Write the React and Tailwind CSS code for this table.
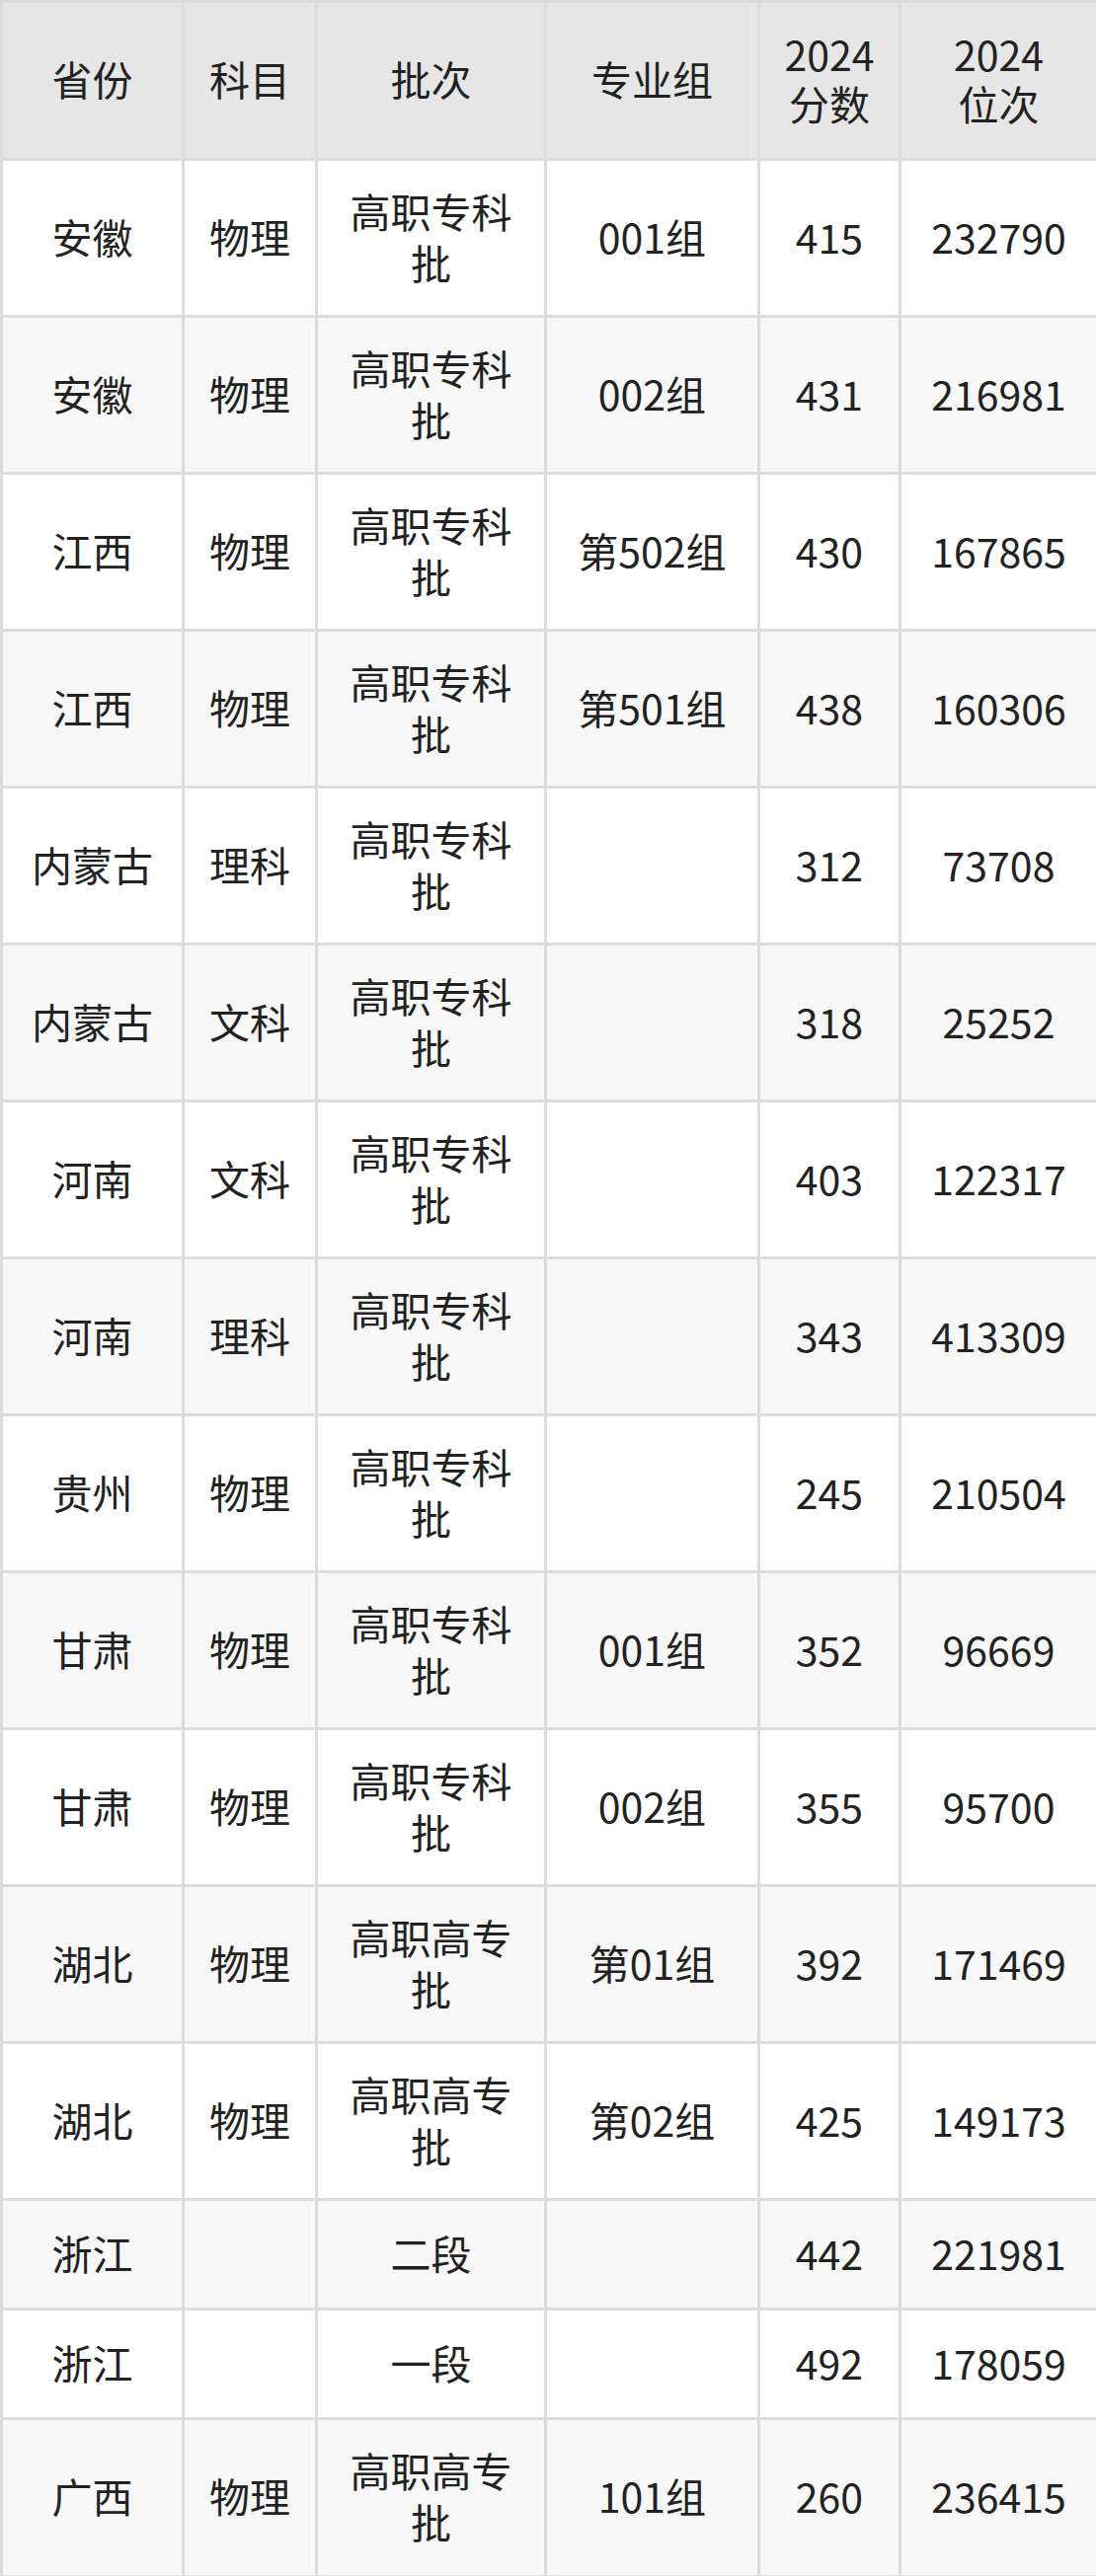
import React from "react";

const rows = [
  { prov: "安徽", subj: "物理", batch: "高职专科批", group: "001组", score: "415", rank: "232790" },
  { prov: "安徽", subj: "物理", batch: "高职专科批", group: "002组", score: "431", rank: "216981" },
  { prov: "江西", subj: "物理", batch: "高职专科批", group: "第502组", score: "430", rank: "167865" },
  { prov: "江西", subj: "物理", batch: "高职专科批", group: "第501组", score: "438", rank: "160306" },
  { prov: "内蒙古", subj: "理科", batch: "高职专科批", group: "", score: "312", rank: "73708" },
  { prov: "内蒙古", subj: "文科", batch: "高职专科批", group: "", score: "318", rank: "25252" },
  { prov: "河南", subj: "文科", batch: "高职专科批", group: "", score: "403", rank: "122317" },
  { prov: "河南", subj: "理科", batch: "高职专科批", group: "", score: "343", rank: "413309" },
  { prov: "贵州", subj: "物理", batch: "高职专科批", group: "", score: "245", rank: "210504" },
  { prov: "甘肃", subj: "物理", batch: "高职专科批", group: "001组", score: "352", rank: "96669" },
  { prov: "甘肃", subj: "物理", batch: "高职专科批", group: "002组", score: "355", rank: "95700" },
  { prov: "湖北", subj: "物理", batch: "高职高专批", group: "第01组", score: "392", rank: "171469" },
  { prov: "湖北", subj: "物理", batch: "高职高专批", group: "第02组", score: "425", rank: "149173" },
  { prov: "浙江", subj: "", batch: "二段", group: "", score: "442", rank: "221981", short: true },
  { prov: "浙江", subj: "", batch: "一段", group: "", score: "492", rank: "178059", short: true },
  { prov: "广西", subj: "物理", batch: "高职高专批", group: "101组", score: "260", rank: "236415", last: true },
];

const cell = "border-[3px] border-[#dcdcdc] text-center align-middle pb-[5px]";

const App = () => {
  return (
    <div
      className="w-[1110px] bg-white text-[#222] text-[41px] leading-[52px]"
      style={{ fontFamily: '"Noto Sans CJK SC", "Noto Sans", sans-serif' }}
    >
      <table className="w-[1110px] table-fixed border-collapse">
        <colgroup>
          <col className="w-[184px]" />
          <col className="w-[135px]" />
          <col className="w-[232px]" />
          <col className="w-[216px]" />
          <col className="w-[143px]" />
          <col className="w-[200px]" />
        </colgroup>
        <thead>
          {/* Header */}
          <tr className="h-[160px] bg-[#e6e6e6]">
            <th className={`${cell} font-normal`}>省份</th>
            <th className={`${cell} font-normal`}>科目</th>
            <th className={`${cell} font-normal`}>批次</th>
            <th className={`${cell} font-normal`}>专业组</th>
            <th className={`${cell} font-normal leading-[50px]`}>
              <span className="inline-block w-[110px]">2024分数</span>
            </th>
            <th className={`${cell} font-normal leading-[50px]`}>
              <span className="inline-block w-[110px]">2024位次</span>
            </th>
          </tr>
        </thead>
        <tbody>
          {rows.map((r, i) => (
            <tr
              key={i}
              className={`${r.short ? "h-[111px]" : r.last ? "h-[160px]" : "h-[159px]"} ${
                i % 2 === 0 ? "bg-white" : "bg-[#f7f7f7]"
              }`}
            >
              <td className={cell}>{r.prov}</td>
              <td className={cell}>{r.subj}</td>
              <td className={`${cell} px-[22px]`}>{r.batch}</td>
              <td className={cell}>{r.group}</td>
              <td className={cell}>{r.score}</td>
              <td className={cell}>{r.rank}</td>
            </tr>
          ))}
        </tbody>
      </table>
    </div>
  );
};

export default App;
